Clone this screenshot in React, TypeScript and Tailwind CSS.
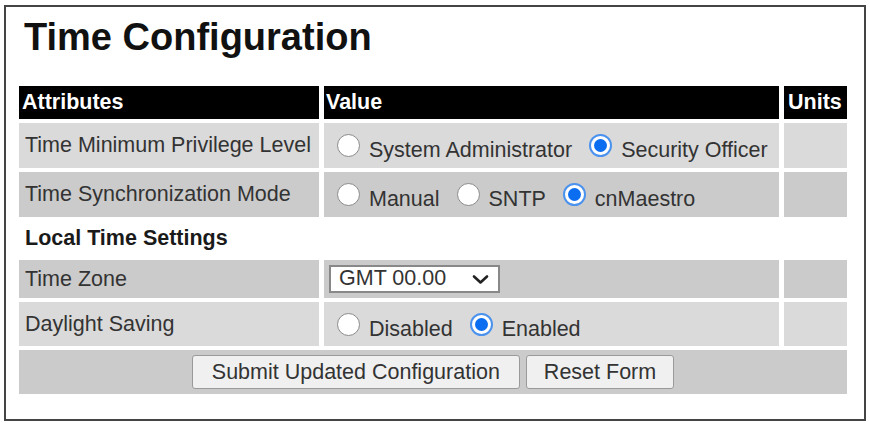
import React from 'react';

function Radio({ checked }: { checked?: boolean }) {
  if (checked) {
    return (
      <span className="flex h-[23px] w-[23px] shrink-0 items-center justify-center rounded-full border-2 border-[#4a92ee] bg-white">
        <span className="h-[13px] w-[13px] rounded-full bg-[#0b6df0]" />
      </span>
    );
  }
  return <span className="block h-[23px] w-[23px] shrink-0 rounded-full border border-[#8a8a8a] bg-white" />;
}

function RadioGroup({ options, selected }: { options: string[]; selected: string }) {
  return (
    <div className="flex items-center gap-[9px] pl-[5px]">
      {options.map((opt) => (
        <label key={opt} className="flex items-center">
          <span className="ml-[8px] block">
            <Radio checked={opt === selected} />
          </span>
          <span className="ml-[9px] pt-[10px]">{opt}</span>
        </label>
      ))}
    </div>
  );
}

const light = 'bg-[#dadada]';
const dark = 'bg-[#cbcbcb]';

export default function App() {
  return (
    <div className="min-h-[423px] bg-white font-['Liberation_Sans',Arial,sans-serif] text-[21.5px] text-[#333]">
      <div className="ml-[4px] mt-[5px] h-[416px] w-[862px] border-2 border-[#444] pl-[13px] pt-[8px]">
        <h1 className="mb-[27px] pl-[5px] text-[38px] font-bold leading-[44px] text-[#111]">Time Configuration</h1>

        <div className="grid grid-cols-[300px_455px_63px] gap-x-[5px] gap-y-[4px]">
          {/* header */}
          <div className="flex h-[33px] items-center bg-black pl-[3px] font-bold text-white">Attributes</div>
          <div className="flex h-[33px] items-center bg-black pl-[2px] font-bold text-white">Value</div>
          <div className="flex h-[33px] items-center bg-black pl-[4px] font-bold text-white">Units</div>

          {/* Time Minimum Privilege Level */}
          <div className={`flex h-[45px] items-center pl-[6px] ${light}`}>Time Minimum Privilege Level</div>
          <div className={`flex h-[45px] items-center ${light}`}>
            <RadioGroup options={['System Administrator', 'Security Officer']} selected="Security Officer" />
          </div>
          <div className={`h-[45px] ${light}`} />

          {/* Time Synchronization Mode */}
          <div className={`flex h-[45px] items-center pl-[6px] ${dark}`}>Time Synchronization Mode</div>
          <div className={`flex h-[45px] items-center ${dark}`}>
            <RadioGroup options={['Manual', 'SNTP', 'cnMaestro']} selected="cnMaestro" />
          </div>
          <div className={`h-[45px] ${dark}`} />

          {/* section */}
          <div className="col-span-3 flex h-[35px] items-center pl-[6px] font-bold text-[#1a1a1a]">Local Time Settings</div>

          {/* Time Zone */}
          <div className={`flex h-[38px] items-center pl-[6px] ${dark}`}>Time Zone</div>
          <div className={`flex h-[38px] items-center pl-[5px] ${dark}`}>
            <div className="flex h-[28px] w-[171px] items-center justify-between border-2 border-[#888] bg-white pl-[8px] pr-[9px]">
              <span className="leading-none">GMT 00.00</span>
              <svg width="17" height="11" viewBox="0 0 17 11" fill="none">
                <path d="M2 2.5 L8.5 8.5 L15 2.5" stroke="#222" strokeWidth="2.6" strokeLinecap="round" strokeLinejoin="round" />
              </svg>
            </div>
          </div>
          <div className={`h-[38px] ${dark}`} />

          {/* Daylight Saving */}
          <div className={`flex h-[44px] items-center pl-[6px] ${light}`}>Daylight Saving</div>
          <div className={`flex h-[44px] items-center ${light}`}>
            <RadioGroup options={['Disabled', 'Enabled']} selected="Enabled" />
          </div>
          <div className={`h-[44px] ${light}`} />

          {/* buttons */}
          <div className={`col-span-3 flex h-[44px] items-center justify-center gap-[6px] ${dark}`}>
            <button className="h-[34px] rounded-[3px] border border-[#9a9a9a] bg-[#f0f0f0] px-[19px] text-[#333]">
              Submit Updated Configuration
            </button>
            <button className="h-[34px] rounded-[3px] border border-[#9a9a9a] bg-[#f0f0f0] px-[17px] text-[#333]">
              Reset Form
            </button>
          </div>
        </div>
      </div>
    </div>
  );
}
